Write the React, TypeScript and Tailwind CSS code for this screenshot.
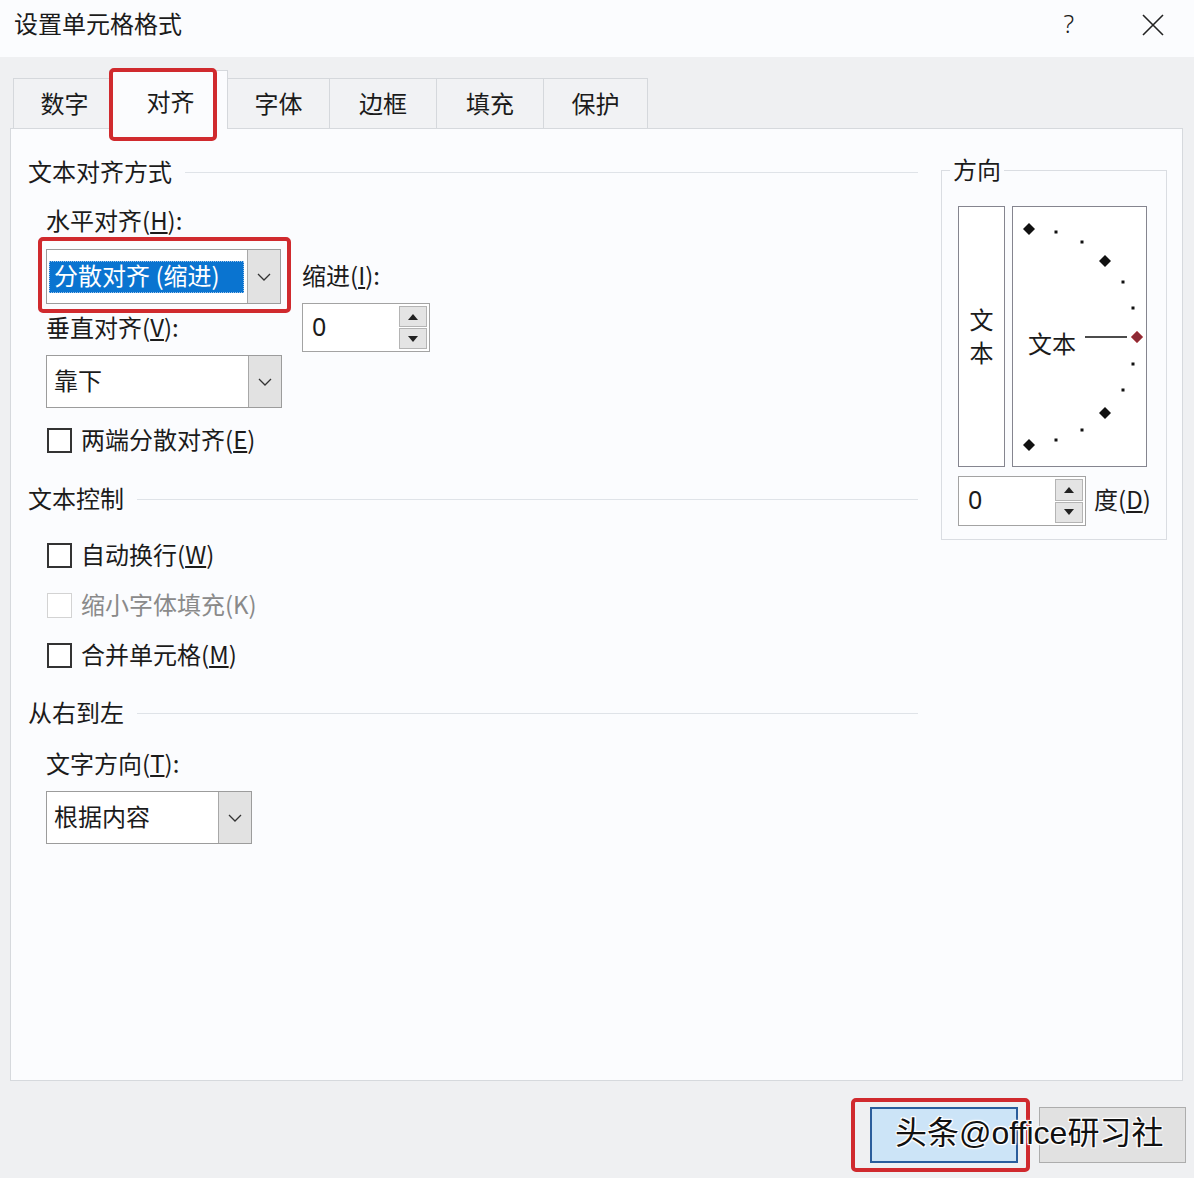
import React from "react";

const tabs = [
  { label: "数字", w: "w-[97px]" },
  { label: "对齐", w: "w-[119px]", active: true },
  { label: "字体", w: "w-[103px]" },
  { label: "边框", w: "w-[108px]" },
  { label: "填充", w: "w-[108px]" },
  { label: "保护", w: "w-[105px]" },
];

const Chevron = () => (
  <svg width="16" height="10" viewBox="0 0 16 10">
    <polyline points="2,2 8,8 14,2" fill="none" stroke="#333" strokeWidth="1.3" />
  </svg>
);

const SpinButtons = () => (
  <div className="w-[30px] flex flex-col py-[2px] pr-[2px] gap-[1px]">
    <div className="flex-1 bg-[#e4e4e4] border border-[#b4b4b4] flex items-center justify-center">
      <svg width="10" height="6" viewBox="0 0 10 6">
        <polygon points="5,0 10,6 0,6" fill="#222" />
      </svg>
    </div>
    <div className="flex-1 bg-[#e4e4e4] border border-[#b4b4b4] flex items-center justify-center">
      <svg width="10" height="6" viewBox="0 0 10 6">
        <polygon points="0,0 10,0 5,6" fill="#222" />
      </svg>
    </div>
  </div>
);

const Spinner = ({ h }: { h: string }) => (
  <div className={`flex w-[128px] ${h} border border-[#a3a3a3] bg-white`}>
    <div className="flex-1 flex items-center pl-[9px] pb-[3px] font-['Noto_Sans',sans-serif] text-[25px]">0</div>
    <SpinButtons />
  </div>
);

const Dropdown = ({
  text,
  w,
  h,
  selected,
}: {
  text: string;
  w: string;
  h: string;
  selected?: boolean;
}) => (
  <div className={`flex ${w} ${h} border border-[#9c9c9c] bg-white`}>
    <div className="flex-1 flex items-center">
      {selected ? (
        <div className="ml-[2px] mr-[3px] flex-1 h-[32px] bg-[#0a74d0] text-white flex items-center pl-[5px] pb-[3px] outline-1 outline-dotted outline-[#9cc3ea] -outline-offset-1">
          {text}
        </div>
      ) : (
        <span className="pl-[7px] pb-[3px]">{text}</span>
      )}
    </div>
    <div className="w-[33px] bg-[#e2e2e2] border-l border-[#a8a8a8] flex items-center justify-center">
      <Chevron />
    </div>
  </div>
);

const Checkbox = ({ children, disabled }: { children: React.ReactNode; disabled?: boolean }) => (
  <div className="flex items-center h-[26px] pl-[19px]">
    <div
      className={`w-[25px] h-[25px] ${disabled ? "border border-[#d3d3d3]" : "border-2 border-[#333]"} bg-white`}
    />
    <span className={`ml-[9px] -mt-[3px] ${disabled ? "text-[#8a8a8a]" : ""}`}>{children}</span>
  </div>
);

const SectionHeader = ({ title, className = "" }: { title: string; className?: string }) => (
  <div className={`flex items-center h-[30px] ${className}`}>
    <span className="-mt-[3px]">{title}</span>
    <div className="flex-1 h-px bg-[#dfe3e8] ml-[13px]" />
  </div>
);

const Dial = () => {
  const diamonds = [
    [16, 22],
    [92, 54],
    [92, 206],
    [16, 238],
  ];
  const dots = [
    [43, 25],
    [69, 35],
    [110, 75],
    [120, 101],
    [120, 157],
    [110, 183],
    [69, 223],
    [43, 233],
  ];
  return (
    <svg width="133" height="259" viewBox="0 0 133 259">
      {diamonds.map(([x, y], i) => (
        <polygon key={i} points={`${x},${y - 6} ${x + 6},${y} ${x},${y + 6} ${x - 6},${y}`} fill="#111" />
      ))}
      {dots.map(([x, y], i) => (
        <rect key={i} x={x - 1.5} y={y - 1.5} width="3" height="3" fill="#111" />
      ))}
      <line x1="72" y1="130" x2="114" y2="130" stroke="#111" strokeWidth="1.3" />
      <polygon points="124,124 130,130 124,136 118,130" fill="#8e2a35" stroke="#c66" strokeWidth="0.6" />
      <text
        x="15"
        y="135"
        dominantBaseline="central"
        fontSize="24"
        fill="#1b1b1b"
        fontFamily="'Noto Sans CJK SC', sans-serif"
      >
        文本
      </text>
    </svg>
  );
};

const RedBox = ({ className }: { className: string }) => (
  <div className={`absolute border-[4px] border-[#d02a2e] rounded-[5px] pointer-events-none ${className}`} />
);

export default function App() {
  return (
    <div className="relative w-[1194px] h-[1178px] bg-[#eff0f2] text-[#1b1b1b] text-[24px] leading-none overflow-hidden font-['Noto_Sans_CJK_SC',sans-serif]">
      {/* title bar */}
      <div className="h-[57px] bg-[#fbfcfe] flex items-center pl-[14px] pr-[30px]">
        <span className="text-[24px] -mt-[11px]">设置单元格格式</span>
        <div className="flex-1" />
        <span className="text-[25px] font-['Noto_Sans',sans-serif] font-light -mt-[10px]">?</span>
        <svg className="ml-[68px] -mt-[8px]" width="22" height="22" viewBox="0 0 22 22">
          <path d="M1 1 L21 21 M21 1 L1 21" stroke="#222" strokeWidth="1.6" />
        </svg>
      </div>

      <div className="pl-[10px] pr-[11px]">
        {/* tabs */}
        <div className="h-[71px] flex items-end pl-[3px]">
          {tabs.map((t, i) =>
            t.active ? (
              <div
                key={t.label}
                className={`${t.w} h-[59px] -mb-px -ml-px relative z-10 bg-[#fbfcfe] border border-b-0 border-[#d5d8dc] flex items-center justify-center pt-[2px] pl-[4px]`}
              >
                {t.label}
              </div>
            ) : (
              <div
                key={t.label}
                className={`${t.w} h-[50px] ${i > 0 ? "-ml-px" : ""} bg-[#f1f2f4] border border-b-0 border-[#d5d8dc] flex items-center justify-center pb-[2px] ${i === 0 ? "pl-[6px]" : ""}`}
              >
                {t.label}
              </div>
            )
          )}
        </div>

        {/* panel */}
        <div className="h-[953px] border border-[#d6d9dd] bg-[#fbfcfe] flex pl-[17px] pt-[28px]">
          <div className="w-[890px]">
            <SectionHeader title="文本对齐方式" />
            <div className="flex pl-[18px] mt-[20px]">
              <div className="w-[236px]">
                <div className="h-[30px] flex items-center pb-[4px]">
                  水平对齐(<span className="underline">H</span>):
                </div>
                <Dropdown text="分散对齐 (缩进)" w="w-[235px]" h="h-[55px] mt-[12px]" selected />
                <div className="h-[30px] flex items-center mt-[10px] pb-[4px]">
                  垂直对齐(<span className="underline">V</span>):
                </div>
                <Dropdown text="靠下" w="w-[236px]" h="h-[53px] mt-[11px]" />
              </div>
              <div className="ml-[20px] pt-[55px]">
                <div className="h-[30px] flex items-center pb-[4px]">
                  缩进(<span className="underline">I</span>):
                </div>
                <div className="mt-[11px]">
                  <Spinner h="h-[49px]" />
                </div>
              </div>
            </div>
            <div className="mt-[19px]">
              <Checkbox>
                两端分散对齐(<span className="underline">E</span>)
              </Checkbox>
            </div>

            <SectionHeader title="文本控制" className="mt-[31px]" />
            <div className="mt-[28px] flex flex-col gap-[24px]">
              <Checkbox>
                自动换行(<span className="underline">W</span>)
              </Checkbox>
              <Checkbox disabled>缩小字体填充(K)</Checkbox>
              <Checkbox>
                合并单元格(<span className="underline">M</span>)
              </Checkbox>
            </div>

            <SectionHeader title="从右到左" className="mt-[30px]" />
            <div className="pl-[18px]">
              <div className="h-[30px] flex items-center mt-[22px] pb-[4px]">
                文字方向(<span className="underline">T</span>):
              </div>
              <Dropdown text="根据内容" w="w-[206px]" h="h-[53px] mt-[11px]" />
            </div>
          </div>

          {/* orientation group */}
          <div className="relative ml-[23px] mt-[13px] w-[226px] h-[370px] border border-[#dadde2] pt-[35px] pl-[16px]">
            <span className="absolute -top-[16px] left-[8px] px-[3px] bg-[#fbfcfe] leading-[28px]">方向</span>
            <div className="flex">
              <div className="w-[47px] h-[261px] border border-[#85858f] bg-white flex flex-col items-center justify-center leading-[33px] pb-[3px]">
                <span>文</span>
                <span>本</span>
              </div>
              <div className="ml-[7px] w-[135px] h-[261px] border border-[#85858f] bg-white">
                <Dial />
              </div>
            </div>
            <div className="flex items-center mt-[9px]">
              <Spinner h="h-[50px]" />
              <span className="ml-[8px] -mt-[4px]">
                度(<span className="underline">D</span>)
              </span>
            </div>
          </div>
        </div>

        {/* buttons */}
        <div className="flex justify-end gap-[21px] pt-[26px] -mr-[3px]">
          <div className="w-[148px] h-[56px] bg-[#cce4f7] border-2 border-[#2a5d9c]" />
          <div className="w-[147px] h-[56px] bg-[#e1e1e1] border border-[#adadad]" />
        </div>
      </div>

      <RedBox className="left-[109px] top-[68px] w-[108px] h-[73px] z-20" />
      <RedBox className="left-[38px] top-[237px] w-[253px] h-[76px]" />
      <RedBox className="left-[851px] top-[1098px] w-[179px] h-[74px]" />

      <div className="absolute left-[895px] top-[1113px] text-[32px] leading-[40px] text-[#111] font-['Liberation_Sans','Noto_Sans_CJK_SC',sans-serif] [text-shadow:0_0_3px_#fff,0_0_3px_#fff,1px_1px_0_#fff,-1px_-1px_0_#fff,1px_-1px_0_#fff,-1px_1px_0_#fff]">
        头条@office研习社
      </div>
    </div>
  );
}
